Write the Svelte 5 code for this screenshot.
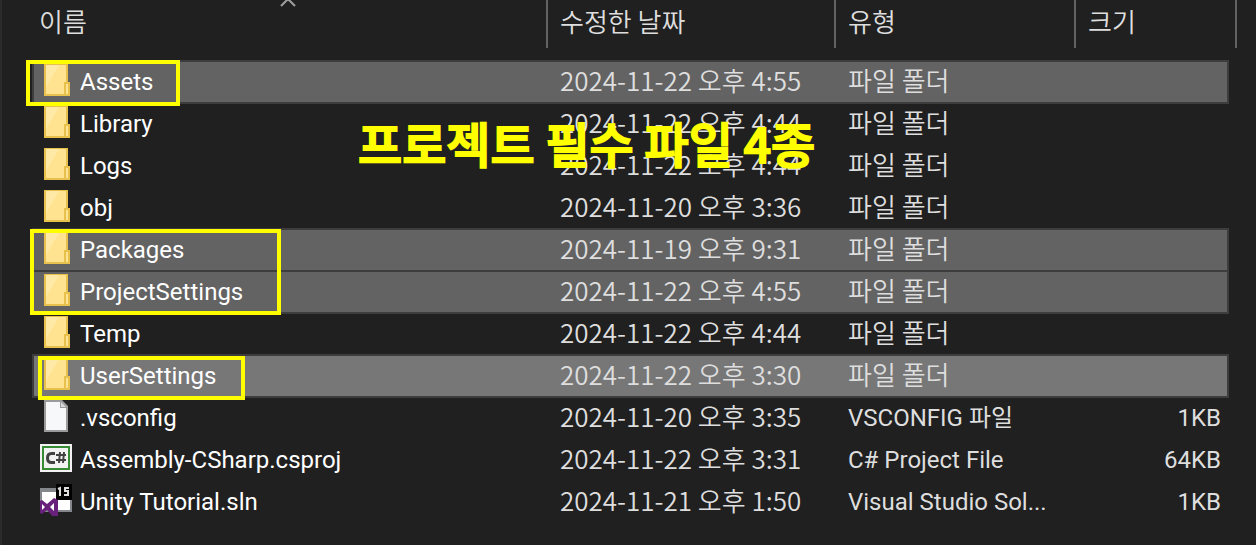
<script>
  let files = [
    { name: 'Assets', date: '2024-11-22 오후 4:55', type: '파일 폴더', size: '', icon: 'folder', selected: true },
    { name: 'Library', date: '2024-11-22 오후 4:44', type: '파일 폴더', size: '', icon: 'folder' },
    { name: 'Logs', date: '2024-11-22 오후 4:44', type: '파일 폴더', size: '', icon: 'folder' },
    { name: 'obj', date: '2024-11-20 오후 3:36', type: '파일 폴더', size: '', icon: 'folder' },
    { name: 'Packages', date: '2024-11-19 오후 9:31', type: '파일 폴더', size: '', icon: 'folder', selected: true },
    { name: 'ProjectSettings', date: '2024-11-22 오후 4:55', type: '파일 폴더', size: '', icon: 'folder', selected: true },
    { name: 'Temp', date: '2024-11-22 오후 4:44', type: '파일 폴더', size: '', icon: 'folder' },
    { name: 'UserSettings', date: '2024-11-22 오후 3:30', type: '파일 폴더', size: '', icon: 'folder', selected: true, focused: true },
    { name: '.vsconfig', date: '2024-11-20 오후 3:35', type: 'VSCONFIG 파일', size: '1KB', icon: 'file' },
    { name: 'Assembly-CSharp.csproj', date: '2024-11-22 오후 3:31', type: 'C# Project File', size: '64KB', icon: 'csharp' },
    { name: 'Unity Tutorial.sln', date: '2024-11-21 오후 1:50', type: 'Visual Studio Sol...', size: '1KB', icon: 'solution' }
  ];
</script>

<main>
  <table>
    <colgroup>
      <col />
      <col class="col-date" />
      <col class="col-type" />
      <col class="col-size" />
    </colgroup>
    <thead>
      <tr>
        <th>
          <div class="head first">
            이름
            <svg class="sort" viewBox="0 0 16 8" aria-hidden="true"><path d="M1 7 8 0 15 7" /></svg>
          </div>
        </th>
        <th><div class="head">수정한 날짜</div></th>
        <th><div class="head">유형</div></th>
        <th><div class="head last">크기</div></th>
      </tr>
    </thead>
    <tbody>
      {#each files as file}
        <tr class:selected={file.selected} class:focused={file.focused}>
          <td class="name">
            <div>
              <svg class="icon" viewBox="0 0 32 32" aria-hidden="true">
                {#if file.icon === 'folder'}
                  <path fill="#e8c04c" d="M4 0h24v18h2v14H4z" />
                  <path fill="#ffe391" d="M6 1h20v17h-2v12H6z" />
                  <path fill="#ffe9a6" d="M6 1h13L6 23z" />
                  <path fill="#ffe391" d="M26 20h2v10h-2z" />
                {:else if file.icon === 'file'}
                  <path fill="#9b9b9b" d="M4 0h18l6 6v26H4z" />
                  <path fill="#f7f8f9" d="M6 2h14v6h6v22H6z" />
                  <path fill="#d8dadb" d="M21 2l5 5h-5z" />
                {:else if file.icon === 'csharp'}
                  <path fill="#f2f2f2" d="M0 2h32v28H0z" />
                  <path fill="none" stroke="#388a34" stroke-width="2" d="M3 5h26v22H3z" />
                  <path fill="none" stroke="#424242" stroke-width="3" d="M15 11.500h-3.500q-4 0-4 4.500t4 4.500h3.500" />
                  <path fill="none" stroke="#424242" stroke-width="2" d="M20 10l-1 11M24 10l-1 11M16 13h10M16 18h10" />
                {:else}
                  <path fill="#84888c" d="M0 4h32v24H0z" />
                  <path fill="#fff" d="M2 8h28v18H2z" />
                  <path fill="#000" d="M16 0h16v16H16z" />
                  <path fill="none" stroke="#ddd" stroke-width="2" d="M18 5l2-1v8M29 4h-4v3h3v4h-4" />
                  <path fill="#68217a" d="M0 17l2-1 5 4 7-6 4 2v16l-4 2-7-8-5 4-2-1z" />
                  <path fill="#fff" d="M2 20l3 3-3 3zM14 19v8l-4-4z" />
                {/if}
              </svg>
              <span>{file.name}</span>
            </div>
          </td>
          <td>{file.date}</td>
          <td class:latin={file.icon !== 'folder'}>{file.type}</td>
          <td class="size latin">{file.size}</td>
        </tr>
      {/each}
    </tbody>
  </table>

  <!-- notes drawn over the list -->
  <div class="mark assets"></div>
  <div class="mark packages"></div>
  <div class="mark user"></div>
  <p class="caption">프로젝트 필수 파일 4종</p>
</main>

<style>
  :global(body) {
    margin: 0;
    background: #202020;
  }

  main {
    position: relative;
    box-sizing: border-box;
    min-height: 100vh;
    padding: 0 28px 0 31px;
    border-left: 2px solid #2b2b2b;
    background: #202020;
    color: #dedede;
    font-family: 'Noto Sans CJK KR', sans-serif;
    font-size: 26px;
    font-weight: 350;
    line-height: 38px;
    white-space: nowrap;
  }

  table {
    width: 100%;
    table-layout: fixed;
    border-collapse: collapse;
  }

  .col-date {
    width: 288px;
  }

  .col-type {
    width: 240px;
  }

  .col-size {
    width: 152px;
  }

  th {
    height: 61px;
    padding: 0;
    font-weight: inherit;
    text-align: left;
    vertical-align: top;
  }

  .head {
    position: relative;
    box-sizing: border-box;
    height: 48px;
    padding-left: 12px;
    border-right: 2px solid #636363;
    line-height: 42px;
  }

  .head.first {
    padding-left: 6px;
  }

  .head.last {
    margin-right: -9px;
  }

  .sort {
    position: absolute;
    top: -1px;
    left: 50%;
    width: 16px;
    height: 8px;
    margin-left: -10px;
    fill: none;
    stroke: #a0a0a0;
    stroke-width: 2;
  }

  td {
    box-sizing: border-box;
    height: 42px;
    padding: 0 12px 4px;
    vertical-align: top;
  }

  .name {
    padding: 0 7px;
    color: #fff;
    font-family: Roboto, sans-serif;
    font-size: 24px;
    font-weight: 400;
  }

  .name div {
    display: flex;
    gap: 8px;
    line-height: 42px;
  }

  .icon {
    width: 32px;
    height: 32px;
    margin-top: 3px;
    flex: none;
  }

  .latin {
    font-family: Roboto, 'Noto Sans CJK KR', sans-serif;
    font-size: 24px;
    font-weight: 400;
    line-height: 42px;
    padding-bottom: 0;
  }

  .size {
    padding-right: 7px;
    text-align: right;
  }

  .selected {
    background: #636363;
    outline: 2px solid #3d3d3d;
    outline-offset: -1px;
  }

  .focused {
    background: #777;
  }

  .mark {
    position: absolute;
    box-sizing: border-box;
    border: 4px solid #ff0;
  }

  .assets {
    top: 60px;
    left: 24px;
    width: 154px;
    height: 46px;
  }

  .packages {
    top: 229px;
    left: 28px;
    width: 251px;
    height: 86px;
  }

  .user {
    top: 356px;
    left: 36px;
    width: 207px;
    height: 44px;
  }

  .caption {
    position: absolute;
    top: 118px;
    left: 356px;
    margin: 0;
    color: #ff0;
    font-size: 48px;
    font-weight: 500;
    line-height: 48px;
    -webkit-text-stroke: 2px #ff0;
  }
</style>
